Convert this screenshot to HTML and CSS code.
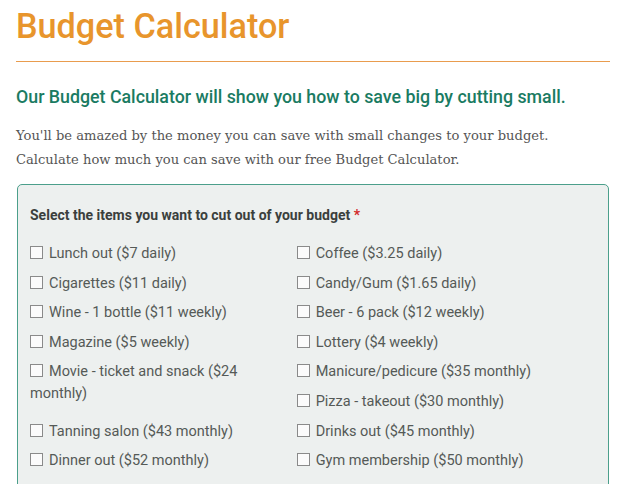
FILE: index.html
```html
<!DOCTYPE html>
<html>
<head>
<meta charset="utf-8">
<link rel="stylesheet" href="styles.css">
</head>
<body>
<h1 class="title">Budget Calculator</h1>
<div class="rule"></div>
<h2 class="subtitle">Our Budget Calculator will show you how to save big by cutting small.</h2>
<p class="intro">You'll be amazed by the money you can save with small changes to your budget.<br>Calculate how much you can save with our free Budget Calculator.</p>
<div class="panel">
  <div class="label">Select the items you want to cut out of your budget <span class="req">*</span></div>
  <ul class="items">
    <li class="item"><span class="box"></span>Lunch out ($7 daily)</li>
    <li class="item"><span class="box"></span>Coffee ($3.25 daily)</li>
    <li class="item"><span class="box"></span>Cigarettes ($11 daily)</li>
    <li class="item"><span class="box"></span>Candy/Gum ($1.65 daily)</li>
    <li class="item"><span class="box"></span>Wine - 1 bottle ($11 weekly)</li>
    <li class="item"><span class="box"></span>Beer - 6 pack ($12 weekly)</li>
    <li class="item"><span class="box"></span>Magazine ($5 weekly)</li>
    <li class="item"><span class="box"></span>Lottery ($4 weekly)</li>
    <li class="item item-tall"><span class="box"></span>Movie - ticket and snack ($24 monthly)</li>
    <li class="item"><span class="box"></span>Manicure/pedicure ($35 monthly)</li>
    <li class="item"><span class="box"></span>Pizza - takeout ($30 monthly)</li>
    <li class="item"><span class="box"></span>Tanning salon ($43 monthly)</li>
    <li class="item"><span class="box"></span>Drinks out ($45 monthly)</li>
    <li class="item"><span class="box"></span>Dinner out ($52 monthly)</li>
    <li class="item"><span class="box"></span>Gym membership ($50 monthly)</li>
  </ul>
</div>
</body>
</html>
```
FILE: styles.css
```css
html, body {
  margin: 0;
  padding: 0;
  background: #ffffff;
}
body {
  padding: 0 14px 0 16px;
  font-family: Roboto, "Liberation Sans", sans-serif;
}
.title {
  margin: 0;
  padding-top: 6px;
  font-family: Roboto, sans-serif;
  font-weight: 500;
  font-size: 34.2px;
  line-height: 40px;
  color: #e8952c;
}
.rule {
  margin: 15px 0 0 0;
  height: 1px;
  background: #e99c4e;
}
.subtitle {
  margin: 23px 0 0 0;
  font-family: Roboto, sans-serif;
  font-weight: 500;
  font-size: 17.8px;
  line-height: 24px;
  color: #1a7b62;
}
.intro {
  margin: 15px 0 0 0;
  font-family: "DejaVu Serif", serif;
  font-size: 13.1px;
  line-height: 24px;
  color: #555555;
}
.panel {
  margin: 12px 1px 0 1px;
  border: 1px solid #4b9f8b;
  border-radius: 5px;
  background: #edf0ef;
  padding: 20px 13px 40px 12px;
}
.label {
  font-family: Roboto, sans-serif;
  font-weight: 700;
  font-size: 14px;
  line-height: 20px;
  color: #3b3f3d;
}
.req {
  color: #d22a2a;
}
.items {
  list-style: none;
  margin: 18px 0 0 0;
  padding: 0;
  overflow: hidden;
}
.item {
  float: left;
  width: 47.2%;
  box-sizing: border-box;
  padding-right: 10px;
  font-size: 14.5px;
  line-height: 22px;
  height: 29.6px;
  color: #555a57;
}
.item-tall {
  height: 59px;
}
.box {
  display: inline-block;
  width: 11px;
  height: 11px;
  border: 1px solid #8a8a8a;
  background: #fbfbfb;
  margin: 0 6px 0 0;
  vertical-align: -1px;
}
```
